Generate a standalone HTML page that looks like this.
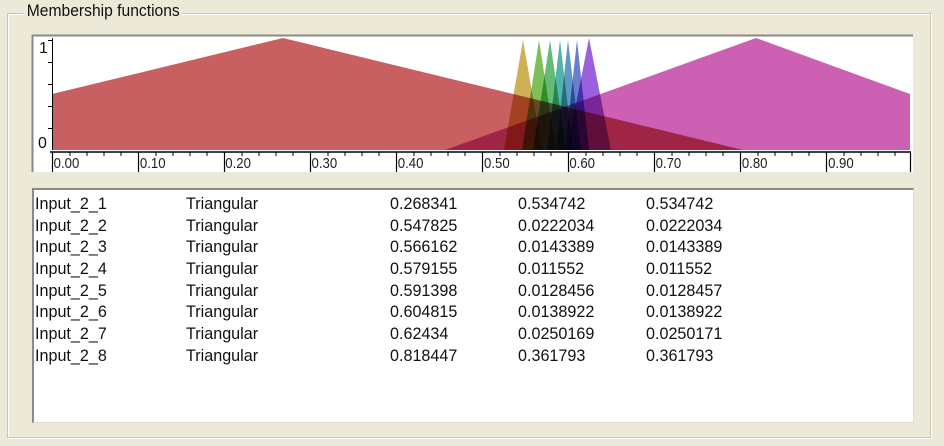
<!DOCTYPE html>
<html><head><meta charset="utf-8"><style>
html,body{margin:0;padding:0;width:944px;height:446px;background:#ece9d8;overflow:hidden;position:relative;font-family:"Liberation Sans",sans-serif;}
.gb{position:absolute;left:7px;top:13px;width:922px;height:423px;border:1px solid #c9c6b5;box-shadow:inset 1px 1px 0 #fff,1px 1px 0 #fff;}
.gl{position:absolute;left:24px;top:1px;background:#ece9d8;padding:0 3px;font-size:17px;color:#111;transform:scaleX(0.92);transform-origin:left;}
.list{position:absolute;left:32px;top:188px;width:879px;height:232px;background:#fff;border-top:2px solid #8c8a80;border-left:2px solid #8c8a80;border-right:1px solid #e0ddd0;border-bottom:1px solid #e0ddd0;}
.r{position:absolute;font-size:17px;color:#111;white-space:nowrap;transform:scaleX(0.95);transform-origin:left;}
</style></head><body>
<div class="gb"></div>
<div class="gl">Membership functions</div>
<svg style="position:absolute;left:0;top:0" width="944" height="446" viewBox="0 0 944 446">
<rect x="32" y="35" width="881" height="137" fill="#fff"/>
<line x1="32" y1="35.5" x2="913" y2="35.5" stroke="#8c8a80" stroke-width="2"/>
<line x1="32.5" y1="35" x2="32.5" y2="172" stroke="#8c8a80" stroke-width="2"/>
<g style="isolation:isolate">
<polygon points="52,150 52,94 283,38 743,150" fill="#c86062" style="mix-blend-mode:multiply"/>
<polygon points="445,150 756,38 910,94 910,150" fill="#cc60b2" style="mix-blend-mode:multiply"/>
<polygon points="504,150 523,40 542,150" fill="#caa845" style="mix-blend-mode:multiply" opacity="0.9"/>
<polygon points="522,150 539,40 556,150" fill="#70b845" style="mix-blend-mode:multiply" opacity="0.9"/>
<polygon points="533,150 550,40 566,150" fill="#52b468" style="mix-blend-mode:multiply" opacity="0.9"/>
<polygon points="547,150 560,40 573,150" fill="#40aaa0" style="mix-blend-mode:multiply" opacity="0.9"/>
<polygon points="556,150 568,40 581,150" fill="#4a90b8" style="mix-blend-mode:multiply" opacity="0.9"/>
<polygon points="565,150 577,40 589,150" fill="#5a70c8" style="mix-blend-mode:multiply" opacity="0.9"/>
<polygon points="567,150 589,38 611,150" fill="#9050d8" style="mix-blend-mode:multiply" opacity="0.9"/>
</g>
<line x1="52.5" y1="38" x2="52.5" y2="150" stroke="#000"/>
<line x1="48" y1="40.5" x2="52" y2="40.5" stroke="#000"/>
<line x1="48" y1="62.5" x2="52" y2="62.5" stroke="#000"/>
<line x1="48" y1="84.5" x2="52" y2="84.5" stroke="#000"/>
<line x1="48" y1="106.5" x2="52" y2="106.5" stroke="#000"/>
<line x1="48" y1="128.5" x2="52" y2="128.5" stroke="#000"/>
<text x="39" y="53" font-size="16" font-family="Liberation Sans" fill="#111">1</text>
<text x="38" y="148" font-size="16" font-family="Liberation Sans" fill="#111">0</text>
<line x1="50" y1="152" x2="911" y2="152" stroke="#000" stroke-width="1.5"/>
<g stroke="#000" stroke-width="1.2">
<line x1="52.5" y1="152" x2="52.5" y2="172"/><line x1="138.5" y1="152" x2="138.5" y2="172"/><line x1="224.5" y1="152" x2="224.5" y2="172"/><line x1="310.5" y1="152" x2="310.5" y2="172"/><line x1="396.5" y1="152" x2="396.5" y2="172"/><line x1="482.5" y1="152" x2="482.5" y2="172"/><line x1="568.5" y1="152" x2="568.5" y2="172"/><line x1="654.5" y1="152" x2="654.5" y2="172"/><line x1="740.5" y1="152" x2="740.5" y2="172"/><line x1="826.5" y1="152" x2="826.5" y2="172"/><line x1="910.5" y1="152" x2="910.5" y2="172"/>
</g>
<g stroke="#000" stroke-width="1">
<line x1="70" y1="152" x2="70" y2="156"/><line x1="87" y1="152" x2="87" y2="156"/><line x1="104" y1="152" x2="104" y2="156"/><line x1="121" y1="152" x2="121" y2="156"/>
<line x1="156" y1="152" x2="156" y2="156"/><line x1="173" y1="152" x2="173" y2="156"/><line x1="190" y1="152" x2="190" y2="156"/><line x1="207" y1="152" x2="207" y2="156"/>
<line x1="242" y1="152" x2="242" y2="156"/><line x1="259" y1="152" x2="259" y2="156"/><line x1="276" y1="152" x2="276" y2="156"/><line x1="293" y1="152" x2="293" y2="156"/>
<line x1="328" y1="152" x2="328" y2="156"/><line x1="345" y1="152" x2="345" y2="156"/><line x1="362" y1="152" x2="362" y2="156"/><line x1="379" y1="152" x2="379" y2="156"/>
<line x1="414" y1="152" x2="414" y2="156"/><line x1="431" y1="152" x2="431" y2="156"/><line x1="448" y1="152" x2="448" y2="156"/><line x1="465" y1="152" x2="465" y2="156"/>
<line x1="500" y1="152" x2="500" y2="156"/><line x1="517" y1="152" x2="517" y2="156"/><line x1="534" y1="152" x2="534" y2="156"/><line x1="551" y1="152" x2="551" y2="156"/>
<line x1="586" y1="152" x2="586" y2="156"/><line x1="603" y1="152" x2="603" y2="156"/><line x1="620" y1="152" x2="620" y2="156"/><line x1="637" y1="152" x2="637" y2="156"/>
<line x1="672" y1="152" x2="672" y2="156"/><line x1="689" y1="152" x2="689" y2="156"/><line x1="706" y1="152" x2="706" y2="156"/><line x1="723" y1="152" x2="723" y2="156"/>
<line x1="758" y1="152" x2="758" y2="156"/><line x1="775" y1="152" x2="775" y2="156"/><line x1="792" y1="152" x2="792" y2="156"/><line x1="809" y1="152" x2="809" y2="156"/>
<line x1="844" y1="152" x2="844" y2="156"/><line x1="861" y1="152" x2="861" y2="156"/><line x1="878" y1="152" x2="878" y2="156"/><line x1="895" y1="152" x2="895" y2="156"/>
</g>
<g font-size="15" font-family="Liberation Sans" fill="#222" transform="scale(0.88,1)">
<text x="61" y="168">0.00</text><text x="159" y="168">0.10</text><text x="256" y="168">0.20</text><text x="354" y="168">0.30</text><text x="452" y="168">0.40</text><text x="550" y="168">0.50</text><text x="647" y="168">0.60</text><text x="745" y="168">0.70</text><text x="843" y="168">0.80</text><text x="941" y="168">0.90</text>
</g>
</svg>
<div class="list"></div>
<div class="r" style="left:35px;top:194px">Input_2_1</div><div class="r" style="left:186px;top:194px">Triangular</div><div class="r" style="left:390px;top:194px">0.268341</div><div class="r" style="left:518px;top:194px">0.534742</div><div class="r" style="left:646px;top:194px">0.534742</div>
<div class="r" style="left:35px;top:216px">Input_2_2</div><div class="r" style="left:186px;top:216px">Triangular</div><div class="r" style="left:390px;top:216px">0.547825</div><div class="r" style="left:518px;top:216px">0.0222034</div><div class="r" style="left:646px;top:216px">0.0222034</div>
<div class="r" style="left:35px;top:237px">Input_2_3</div><div class="r" style="left:186px;top:237px">Triangular</div><div class="r" style="left:390px;top:237px">0.566162</div><div class="r" style="left:518px;top:237px">0.0143389</div><div class="r" style="left:646px;top:237px">0.0143389</div>
<div class="r" style="left:35px;top:259px">Input_2_4</div><div class="r" style="left:186px;top:259px">Triangular</div><div class="r" style="left:390px;top:259px">0.579155</div><div class="r" style="left:518px;top:259px">0.011552</div><div class="r" style="left:646px;top:259px">0.011552</div>
<div class="r" style="left:35px;top:281px">Input_2_5</div><div class="r" style="left:186px;top:281px">Triangular</div><div class="r" style="left:390px;top:281px">0.591398</div><div class="r" style="left:518px;top:281px">0.0128456</div><div class="r" style="left:646px;top:281px">0.0128457</div>
<div class="r" style="left:35px;top:302px">Input_2_6</div><div class="r" style="left:186px;top:302px">Triangular</div><div class="r" style="left:390px;top:302px">0.604815</div><div class="r" style="left:518px;top:302px">0.0138922</div><div class="r" style="left:646px;top:302px">0.0138922</div>
<div class="r" style="left:35px;top:324px">Input_2_7</div><div class="r" style="left:186px;top:324px">Triangular</div><div class="r" style="left:390px;top:324px">0.62434</div><div class="r" style="left:518px;top:324px">0.0250169</div><div class="r" style="left:646px;top:324px">0.0250171</div>
<div class="r" style="left:35px;top:346px">Input_2_8</div><div class="r" style="left:186px;top:346px">Triangular</div><div class="r" style="left:390px;top:346px">0.818447</div><div class="r" style="left:518px;top:346px">0.361793</div><div class="r" style="left:646px;top:346px">0.361793</div>
</body></html>
